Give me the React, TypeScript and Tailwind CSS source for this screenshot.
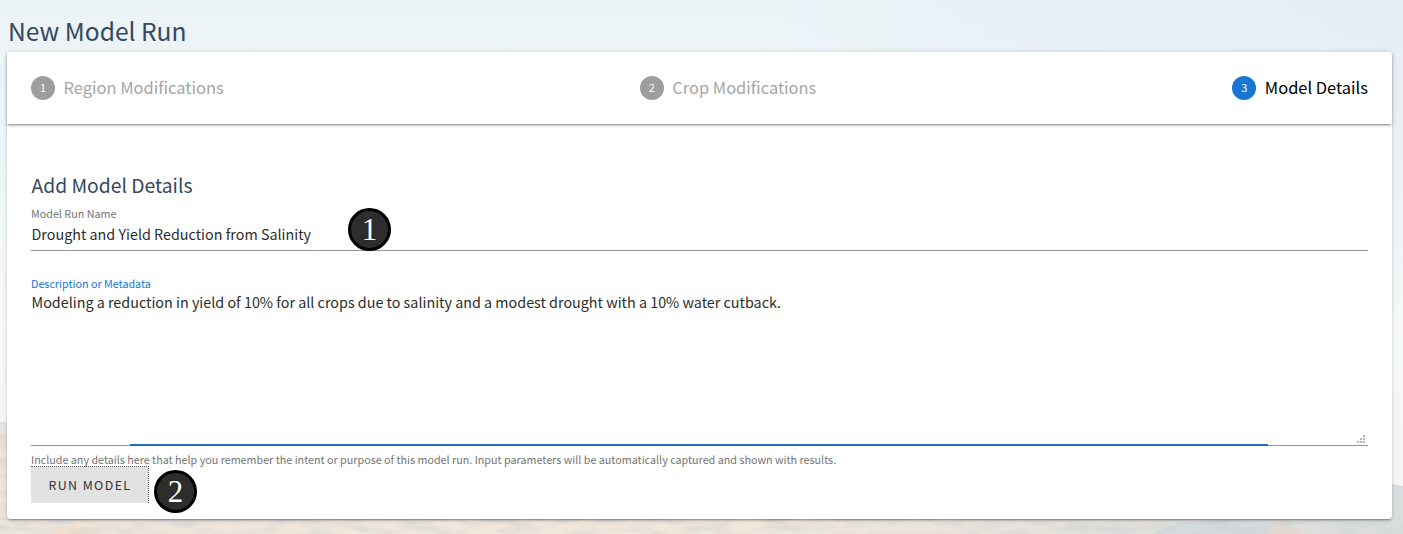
import React from 'react';

const steps = [
  { n: 1, label: 'Region Modifications', active: false },
  { n: 2, label: 'Crop Modifications', active: false },
  { n: 3, label: 'Model Details', active: true },
];

function Landscape() {
  return (
    <svg className="absolute inset-0 h-full w-full" viewBox="0 0 1403 534" preserveAspectRatio="none" aria-hidden="true">
      <defs>
        <linearGradient id="sky" x1="0" y1="0" x2="0" y2="1">
          <stop offset="0" stopColor="#ecf3f7" />
          <stop offset="0.25" stopColor="#eff5f8" />
          <stop offset="0.6" stopColor="#f6f9f9" />
          <stop offset="1" stopColor="#f4f6f5" />
        </linearGradient>
        <radialGradient id="east" gradientUnits="userSpaceOnUse" cx="0" cy="0" r="1" gradientTransform="translate(1403 0) scale(620 330)">
          <stop offset="0" stopColor="#e4ecf4" stopOpacity="0.85" />
          <stop offset="1" stopColor="#e4ecf4" stopOpacity="0" />
        </radialGradient>
        <linearGradient id="land" x1="0" y1="0" x2="1" y2="0">
          <stop offset="0" stopColor="#ede4da" />
          <stop offset="0.3" stopColor="#f1e7dc" />
          <stop offset="0.55" stopColor="#f1e7db" />
          <stop offset="0.75" stopColor="#e6e2dc" />
          <stop offset="1" stopColor="#dadddd" />
        </linearGradient>
        <filter id="grain" x="0" y="0" width="100%" height="100%" colorInterpolationFilters="sRGB">
          <feTurbulence type="fractalNoise" baseFrequency="0.03 0.12" numOctaves="3" seed="4" />
          <feColorMatrix values="0 0 0 0 0.78  0 0 0 0 0.81  0 0 0 0 0.82  3 0 0 0 -1.2" />
        </filter>
      </defs>
      <rect width="1403" height="534" fill="url(#sky)" />
      <rect width="1403" height="340" fill="url(#east)" />
      <path d="M0 422H300L700 500L1200 490L1392 484L1403 486V534H0Z" fill="url(#land)" />
      <path d="M0 422H10V431H0Z" fill="#e3e6e5" />
      <path d="M1150 534L1180 522L1240 519L1300 534Z" fill="#d5dadc" />
      <path d="M1268 528L1280 523L1308 534H1272Z" fill="#e6dad0" />
      <path d="M50 530L75 525L90 528L102 534H55Z" fill="#f3e2cc" />
      <rect y="432" width="8" height="88" filter="url(#grain)" opacity="0.3" />
      <rect y="518" width="1403" height="16" filter="url(#grain)" opacity="0.4" />
    </svg>
  );
}

function Marker({ n, className }: { n: number; className: string }) {
  return (
    <div
      className={`absolute flex h-[43px] w-[43px] items-center justify-center rounded-full border-[3px] border-black bg-[#2d2d2d] font-['Liberation_Serif',serif] text-[31px] leading-none text-white ${className}`}
    >
      {n}
    </div>
  );
}

export default function App() {
  return (
    <div className="relative h-[534px] w-full overflow-hidden pl-[7px] pr-[11px] font-['Noto_Sans_CJK_JP',sans-serif] text-[#333]">
      <Landscape />
      <div className="relative">
        <h1 className="flex h-[52px] items-center pt-[7px] pl-px text-[24.6px] leading-10 text-[#34495e]">New Model Run</h1>
        <main className="h-[467px] rounded-[4px] bg-white shadow-[0_3px_1px_-2px_rgba(0,0,0,0.2),0_2px_2px_0_rgba(0,0,0,0.14),0_1px_5px_0_rgba(0,0,0,0.12)]">
          <ol className="flex h-[72px] items-center justify-between px-6 shadow-[0_3px_1px_-2px_rgba(0,0,0,0.2),0_2px_2px_0_rgba(0,0,0,0.14),0_1px_5px_0_rgba(0,0,0,0.12)]">
            {steps.map((s) => (
              <li key={s.n} className="flex items-center gap-[8.6px]">
                <span className={`flex h-6 w-6 items-center justify-center rounded-full pb-px text-[10.8px] leading-none text-white ${s.active ? 'bg-[#1976d2]' : 'bg-[#9e9e9e]'}`}>
                  {s.n}
                </span>
                <span className={`pb-[2px] text-[16.45px] leading-6 ${s.active ? 'text-black' : 'text-[#a6a6a6]'}`}>{s.label}</span>
              </li>
            ))}
          </ol>
          <form className="px-6 pt-[45px]" onSubmit={(e) => e.preventDefault()}>
            <h2 className="pl-[0.5px] text-[19.3px] leading-8 text-[#34495e]">Add Model Details</h2>
            <div className="relative h-[50px] border-b border-[#949494] pt-[5px]">
              <div className="text-[10.75px] leading-4 text-[#757575]">Model Run Name</div>
              <div className="pl-[0.5px] text-[14.34px] leading-6 text-[#2c2c2c]">Drought and Yield Reduction from Salinity</div>
              <Marker n={1} className="left-[317px] top-[7px]" />
            </div>
            <div className="relative mt-6 h-[171px] border-b border-[#949494] pt-px">
              <div className="text-[10.75px] leading-4 text-[#1976d2]">Description or Metadata</div>
              <div className="pl-[0.5px] text-[14.34px] leading-5 text-[#2c2c2c]">
                Modeling a reduction in yield of 10% for all crops due to salinity and a modest drought with a 10% water cutback.
              </div>
              <svg className="absolute right-[3px] bottom-[2px]" width="8" height="8" fill="#b5b5b5" shapeRendering="crispEdges">
                <path d="M6 0h2v2H6zM3 3h2v2H3zM6 3h2v2H6zM0 6h2v2H0zM3 6h2v2H3zM6 6h2v2H6z" />
              </svg>
              <div className="absolute -bottom-px left-[99px] h-[2px] w-[1138px] bg-[#1b6fc4]" />
            </div>
            <p className="mt-[6px] text-[10.75px] leading-4 text-[#757575]">
              Include any details here that help you remember the intent or purpose of this model run. Input parameters will be automatically captured and shown with results.
            </p>
            <div className="relative -mt-[2px] flex">
              <button className="h-[37px] w-[118px] border-t border-r border-dotted border-[#555] bg-[#e2e2e2] bg-clip-padding pl-px text-[12.4px] leading-9 tracking-[1.4px] text-[#333]">
                RUN MODEL
              </button>
              <Marker n={2} className="left-[123px] top-[4px]" />
            </div>
          </form>
        </main>
      </div>
    </div>
  );
}
